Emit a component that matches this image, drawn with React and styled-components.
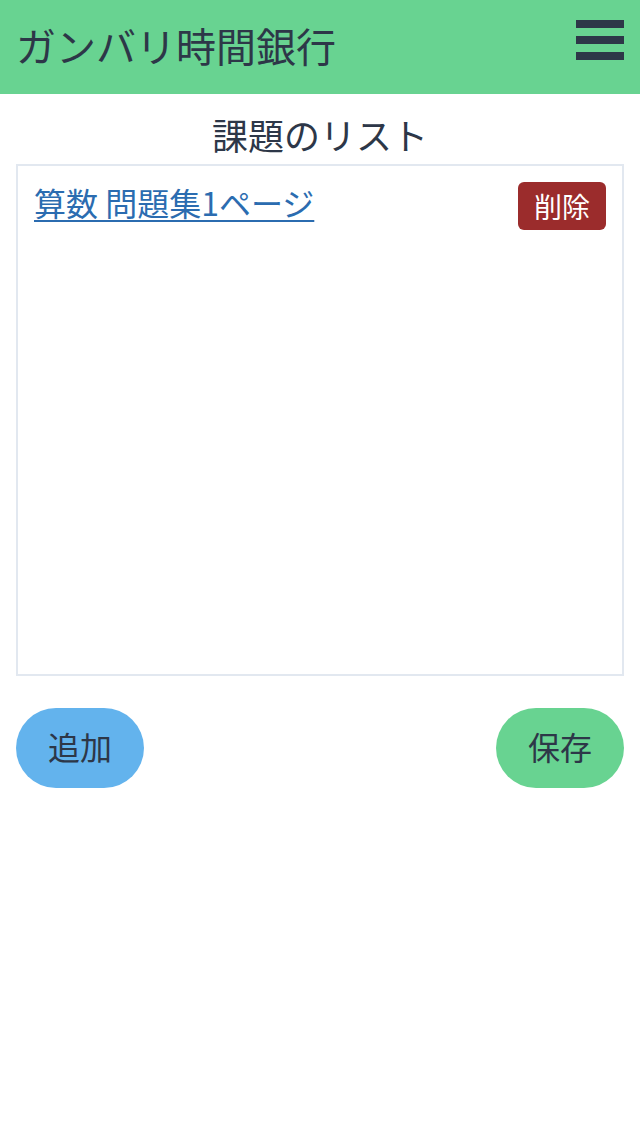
import React, { useState } from 'react';
import styled, { createGlobalStyle } from 'styled-components';

const GlobalStyle = createGlobalStyle`
    body {
        margin: 0;
        background: #ffffff;
        font-family: "Noto Sans CJK JP", "Noto Sans", sans-serif;
        color: #2d3748;
    }
`;

const App = () => {
    const [tasks] = useState(["算数 問題集1ページ"]);

    return (
        <>
            <GlobalStyle />
            <Header>
                <Title>ガンバリ時間銀行</Title>
                <MenuButton aria-label="menu">
                    <Bar />
                    <Bar />
                    <Bar />
                </MenuButton>
            </Header>
            <Main>
                <SectionTitle>課題のリスト</SectionTitle>
                <ListBox>
                    {tasks.map((task) => (
                        <TaskRow key={task}>
                            <TaskLink href="#">{task}</TaskLink>
                            <DeleteButton>削除</DeleteButton>
                        </TaskRow>
                    ))}
                </ListBox>
                <Actions>
                    <PillButton color="#63b3ed">追加</PillButton>
                    <PillButton color="#68d391">保存</PillButton>
                </Actions>
            </Main>
        </>
    );
};

export default App;

const Header = styled.header`
    display: flex;
    justify-content: space-between;
    align-items: center;
    height: 94px;
    padding: 0 16px;
    background-color: #68d391;
    box-sizing: border-box;
`;

const Title = styled.h1`
    margin: 0;
    padding-bottom: 4px;
    font-size: 40px;
    font-weight: 400;
    color: #2d3748;
    line-height: 1;
`;

const MenuButton = styled.div`
    display: flex;
    flex-direction: column;
    gap: 8px;
    width: 48px;
    margin-bottom: 14px;
`;

const Bar = styled.span`
    display: block;
    height: 8px;
    background-color: #2d3748;
`;

const Main = styled.main`
    display: flex;
    flex-direction: column;
    padding: 0 16px;
`;

const SectionTitle = styled.h2`
    margin: 20px 0 0;
    height: 50px;
    font-size: 36px;
    font-weight: 400;
    line-height: 40px;
    text-align: center;
    color: #2d3748;
`;

const ListBox = styled.div`
    display: flex;
    flex-direction: column;
    height: 512px;
    padding: 16px;
    border: 2px solid #e2e8f0;
    box-sizing: border-box;
`;

const TaskRow = styled.div`
    display: flex;
    justify-content: space-between;
    align-items: flex-start;
`;

const TaskLink = styled.a`
    font-size: 32px;
    line-height: 40px;
    color: #2b6cb0;
    text-decoration: underline;
    text-underline-offset: 4px;
    text-decoration-thickness: 2px;
`;

const DeleteButton = styled.button`
    height: 48px;
    padding: 0 16px;
    border: none;
    border-radius: 6px;
    background-color: #9b2c2c;
    color: #ffffff;
    font-family: inherit;
    font-size: 28px;
    cursor: pointer;
`;

const Actions = styled.div`
    display: flex;
    justify-content: space-between;
    margin-top: 32px;
`;

const PillButton = styled.button`
    width: 128px;
    height: 80px;
    padding: 0 0 4px;
    border: none;
    border-radius: 9999px;
    background-color: ${(p) => p.color};
    color: #2d3748;
    font-family: inherit;
    font-size: 32px;
    cursor: pointer;
`;
